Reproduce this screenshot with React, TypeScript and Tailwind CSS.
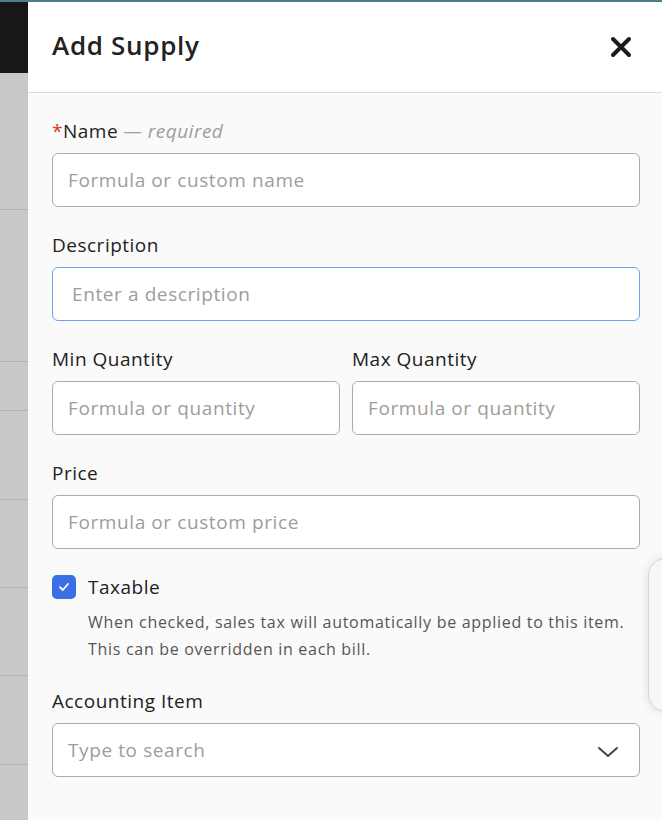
import React from 'react';

const font = { fontFamily: '"Open Sans", "Noto Sans", sans-serif' };

function Field({ label, placeholder, focused }: { label: React.ReactNode; placeholder: string; focused?: boolean }) {
  return (
    <div className="flex flex-col">
      <label className="text-[19px] leading-[24px] tracking-[0.5px] text-[#222]">{label}</label>
      <input
        readOnly
        placeholder={placeholder}
        className={`mt-[10px] h-[54px] w-full rounded-[6px] border bg-white text-[19px] tracking-[0.6px] text-[#222] placeholder:text-[#9d9d9d] outline-none ${
          focused ? 'border-[#6fa3ef] pl-[19px]' : 'border-[#ababab] pl-[15px]'
        }`}
      />
    </div>
  );
}

export default function App() {
  return (
    <div className="relative flex h-[820px] w-full flex-col overflow-hidden bg-[#fafafa]" style={font}>
      <div className="h-[2px] w-full bg-[#4d7e84]" />
      <div className="flex flex-1">
        {/* page behind the drawer */}
        <div className="flex w-[28px] flex-col bg-[#c8c8c8]">
          <div className="h-[71px] bg-[#171717]" />
          <div className="h-[136px]" />
          <div className="h-[152px] border-t border-[#b4b4b4]" />
          <div className="h-[49px] border-t border-[#b4b4b4]" />
          <div className="h-[89px] border-t border-[#b4b4b4]" />
          <div className="h-[88px] border-t border-[#b4b4b4]" />
          <div className="h-[88px] border-t border-[#b4b4b4]" />
          <div className="h-[89px] border-t border-[#b4b4b4]" />
          <div className="flex-1 border-t border-[#b4b4b4]" />
        </div>

        {/* drawer */}
        <div className="flex flex-1 flex-col">
          <div className="flex h-[91px] items-center justify-between border-b border-[#dddddd] bg-white pl-[24px] pr-[30px]">
            <h1 className="-mt-[3px] text-[26px] font-semibold tracking-[0.7px] text-[#222]">Add Supply</h1>
            <svg width="22" height="22" viewBox="0 0 22 22" className="-mt-[1px]">
              <path d="M3 3 L19 19 M19 3 L3 19" stroke="#1c1c1c" strokeWidth="4" strokeLinecap="round" />
            </svg>
          </div>

          <div className="flex flex-col gap-[26px] px-[24px] pr-[22px] pt-[26px]">
            <Field
              label={
                <>
                  <span className="text-[#d9342b]">*</span>Name{' '}
                  <span className="italic text-[#9d9d9d]">— required</span>
                </>
              }
              placeholder="Formula or custom name"
            />
            <Field label="Description" placeholder="Enter a description" focused />
            <div className="grid grid-cols-2 gap-[12px]">
              <Field label="Min Quantity" placeholder="Formula or quantity" />
              <Field label="Max Quantity" placeholder="Formula or quantity" />
            </div>
            <Field label="Price" placeholder="Formula or custom price" />

            <div className="flex gap-[12px]">
              <div className="flex h-[24px] w-[24px] shrink-0 items-center justify-center rounded-[5px] bg-[#3b6fe4]">
                <svg width="14" height="14" viewBox="0 0 14 14">
                  <path d="M3 7.2 L5.8 10 L11 4" fill="none" stroke="white" strokeWidth="1.8" strokeLinecap="round" strokeLinejoin="round" />
                </svg>
              </div>
              <div className="flex flex-col">
                <span className="text-[19px] leading-[24px] tracking-[0.5px] text-[#222]">Taxable</span>
                <p className="mt-[10px] text-[16px] leading-[27px] tracking-[0.7px] text-[#555]">
                  When checked, sales tax will automatically be applied to this item.
                  <br />
                  This can be overridden in each bill.
                </p>
              </div>
            </div>

            <div className="flex flex-col">
              <label className="text-[19px] leading-[24px] tracking-[0.5px] text-[#222]">Accounting Item</label>
              <div className="mt-[10px] flex h-[54px] items-center justify-between rounded-[6px] border border-[#ababab] bg-white pl-[15px] pr-[20px]">
                <span className="text-[19px] tracking-[0.6px] text-[#9d9d9d]">Type to search</span>
                <svg width="22" height="14" viewBox="0 0 22 14" className="mt-[4px]">
                  <path d="M2 3 L11 11 L20 3" fill="none" stroke="#444" strokeWidth="2" strokeLinecap="round" strokeLinejoin="round" />
                </svg>
              </div>
            </div>
          </div>
        </div>
      </div>

      {/* floating widget peeking in from the right edge */}
      <div className="absolute left-[648px] top-[558px] h-[154px] w-[60px] rounded-[18px] border border-[#d6d6d6] bg-[#f7f7f7] shadow-[0_0_10px_rgba(0,0,0,0.12)]" />
    </div>
  );
}
